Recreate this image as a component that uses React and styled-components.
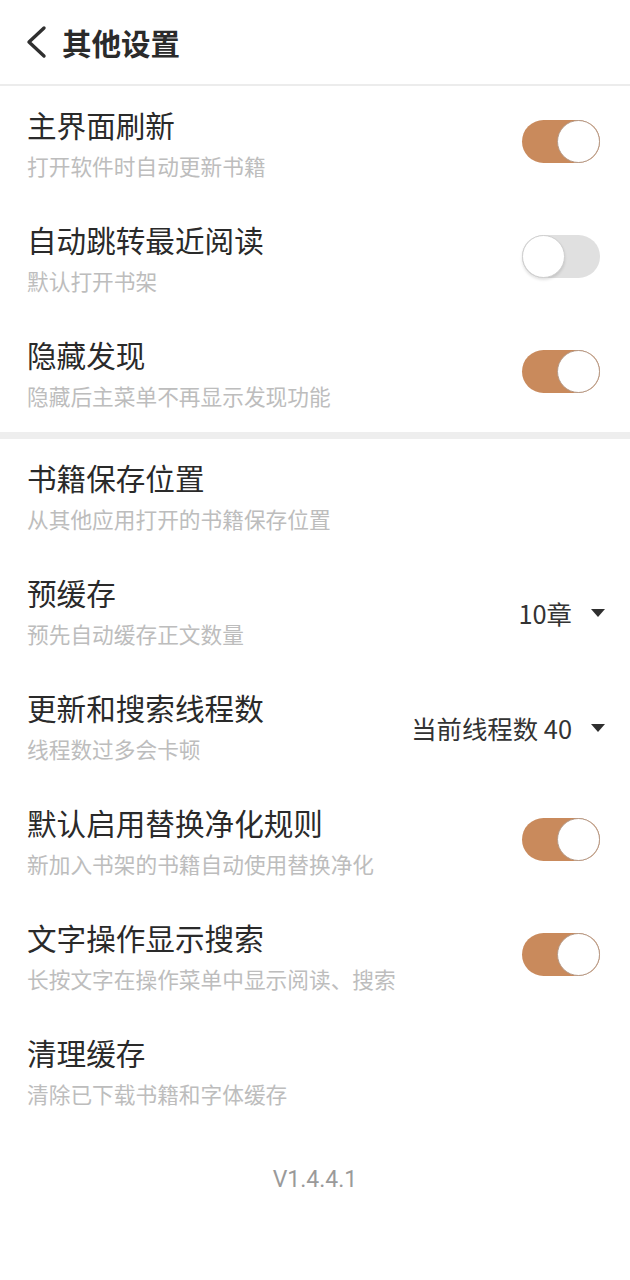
import React from 'react';
import styled, { createGlobalStyle } from 'styled-components';

const GlobalStyle = createGlobalStyle`
  body {
    margin: 0;
    background: #ffffff;
    font-family: "Noto Sans CJK SC", "Noto Sans", sans-serif;
  }
`;

const Page = styled.div`
  width: 630px;
  min-height: 1280px;
  background: #ffffff;
`;

const Header = styled.div`
  height: 84px;
  display: flex;
  align-items: center;
  padding-left: 24px;
  border-bottom: 2px solid #ececec;
  box-sizing: content-box;
`;

const BackIcon = styled.svg`
  width: 24px;
  height: 34px;
  margin-right: 14px;
`;

const Title = styled.h1`
  margin: 0;
  font-size: 29.5px;
  font-weight: 700;
  color: #2b2b2b;
`;

const Section = styled.div`
  display: flex;
  flex-direction: column;
`;

const Divider = styled.div`
  height: 7px;
  margin-top: 1px;
  background: #eeeeee;
`;

const Row = styled.div`
  height: 115px;
  display: flex;
  align-items: center;
  justify-content: space-between;
  padding: 0 30px 0 27px;
  box-sizing: border-box;
`;

const Texts = styled.div`
  display: flex;
  flex-direction: column;
  margin-top: -2px;
`;

const Name = styled.div`
  font-size: 29.6px;
  line-height: 40px;
  color: #2a2a2a;
`;

const Hint = styled.div`
  font-size: 21.7px;
  line-height: 30px;
  margin-top: 6px;
  color: #bdbdbd;
`;

const Switch = styled.div`
  width: 78px;
  height: 43px;
  border-radius: 22px;
  background: ${(p) => (p.on ? '#c98a5c' : '#e0e0e0')};
  display: flex;
  justify-content: ${(p) => (p.on ? 'flex-end' : 'flex-start')};
  align-items: center;
  box-sizing: border-box;
  margin-top: -4px;
`;

const Knob = styled.div`
  width: 43px;
  height: 43px;
  border-radius: 50%;
  background: #ffffff;
  border: 1.5px solid ${(p) => (p.on ? '#b59a88' : '#cfcfcf')};
  box-sizing: border-box;
  box-shadow: ${(p) => (p.on ? 'none' : '0 2px 3px rgba(0,0,0,0.12)')};
`;

const Select = styled.div`
  display: flex;
  align-items: center;
  font-size: 25.4px;
  color: #333333;
  margin-top: 2px;
  margin-right: -5px;
`;

const Caret = styled.span`
  width: 0;
  height: 0;
  margin-left: 19px;
  border-left: 7px solid transparent;
  border-right: 7px solid transparent;
  border-top: 8px solid #2f2f2f;
`;

const Version = styled.div`
  text-align: center;
  font-family: Roboto, "Noto Sans", sans-serif;
  font-size: 23px;
  color: #9a9a9a;
  margin-top: 37px;
`;

const Toggle = ({ on }) => (
  <Switch on={on ? 1 : 0}>
    <Knob on={on ? 1 : 0} />
  </Switch>
);

const Item = ({ name, hint, children }) => (
  <Row>
    <Texts>
      <Name>{name}</Name>
      <Hint>{hint}</Hint>
    </Texts>
    {children}
  </Row>
);

export default function App() {
  return (
    <Page>
      <GlobalStyle />
      <Header>
        <BackIcon viewBox="0 0 24 34">
          <path d="M20 3 L5 17 L20 31" fill="none" stroke="#2f2f2f" strokeWidth="3.4" strokeLinecap="round" strokeLinejoin="round" />
        </BackIcon>
        <Title>其他设置</Title>
      </Header>

      <Section>
        <Item name="主界面刷新" hint="打开软件时自动更新书籍">
          <Toggle on />
        </Item>
        <Item name="自动跳转最近阅读" hint="默认打开书架">
          <Toggle />
        </Item>
        <Item name="隐藏发现" hint="隐藏后主菜单不再显示发现功能">
          <Toggle on />
        </Item>
      </Section>

      <Divider />

      <Section>
        <Item name="书籍保存位置" hint="从其他应用打开的书籍保存位置" />
        <Item name="预缓存" hint="预先自动缓存正文数量">
          <Select>
            10章<Caret />
          </Select>
        </Item>
        <Item name="更新和搜索线程数" hint="线程数过多会卡顿">
          <Select>
            当前线程数 40<Caret />
          </Select>
        </Item>
        <Item name="默认启用替换净化规则" hint="新加入书架的书籍自动使用替换净化">
          <Toggle on />
        </Item>
        <Item name="文字操作显示搜索" hint="长按文字在操作菜单中显示阅读、搜索">
          <Toggle on />
        </Item>
        <Item name="清理缓存" hint="清除已下载书籍和字体缓存" />
      </Section>

      <Version>V1.4.4.1</Version>
    </Page>
  );
}
